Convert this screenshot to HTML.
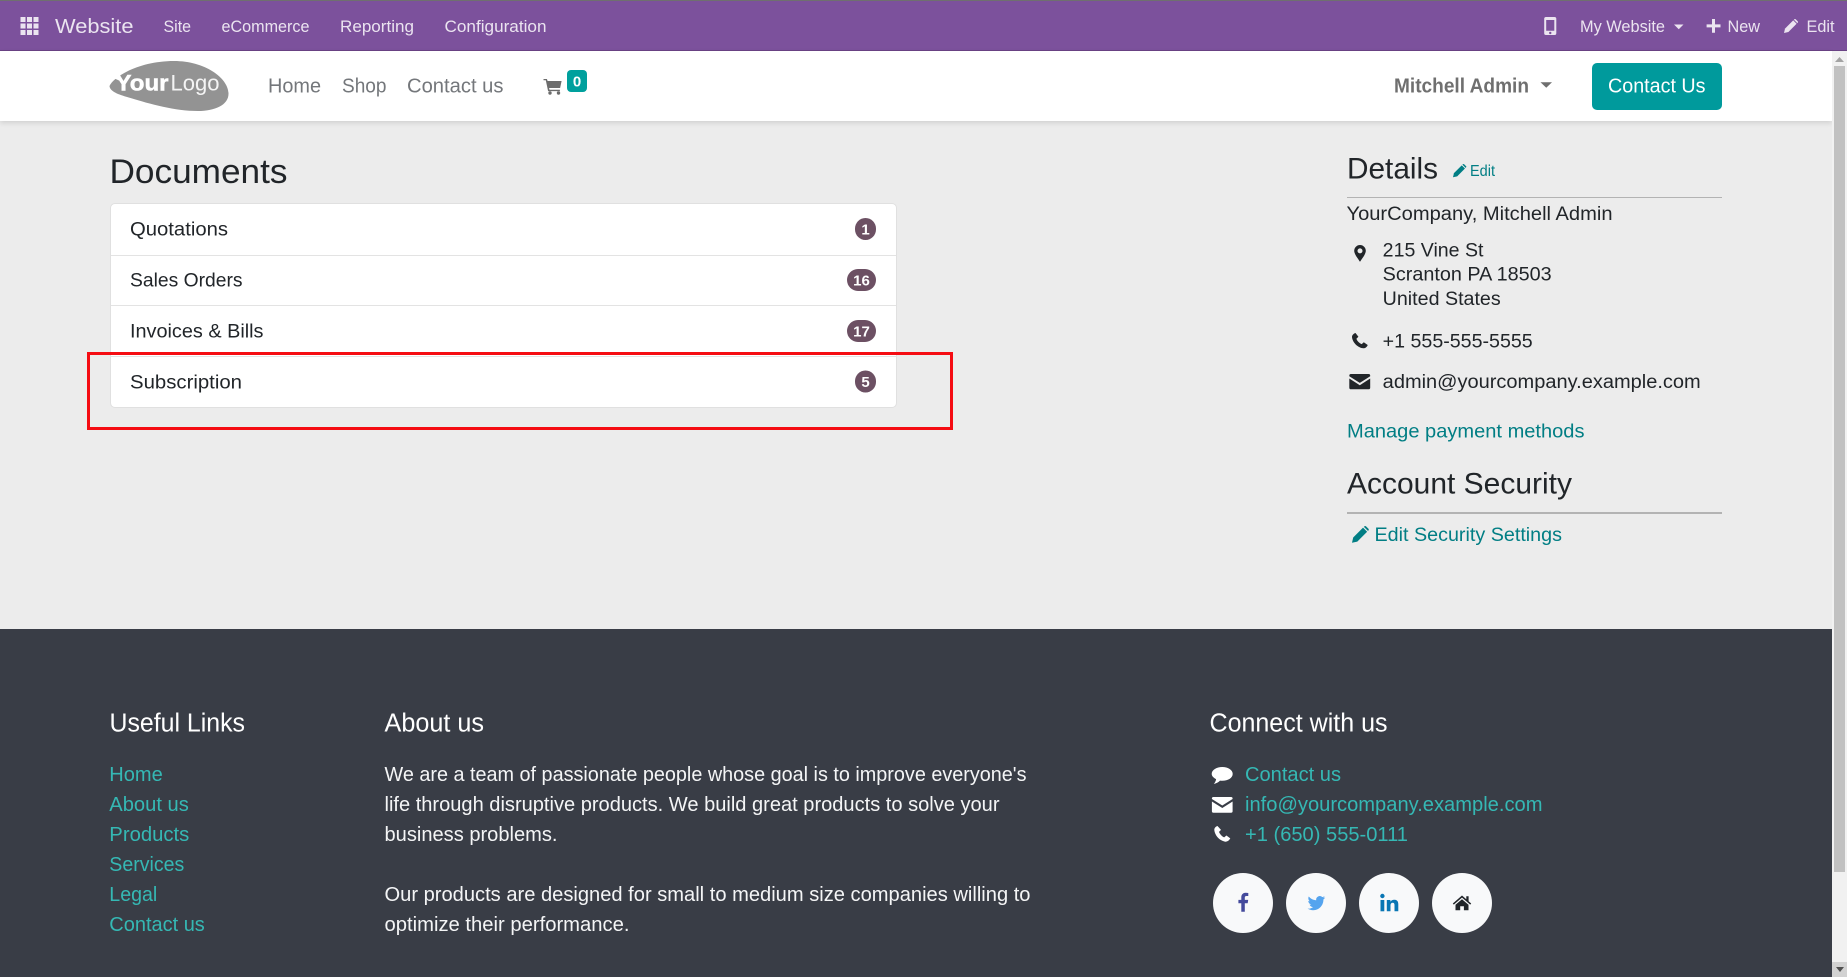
<!DOCTYPE html>
<html lang="en">
<head>
<meta charset="utf-8">
<title>Website</title>
<style>
html,body{margin:0;padding:0;width:1847px;height:977px;overflow:hidden;background:#ececec}
.abs{position:absolute}
#bar{left:0;top:0;width:1847px;height:51px;background:#7c519c;border-top:1px solid #6f6f6f;border-bottom:1px solid #6a4385;box-sizing:border-box}
#head{left:0;top:51px;width:1832px;height:70px;background:#fff;box-shadow:0 2px 5px rgba(0,0,0,.12)}
#foot{left:0;top:629px;width:1832px;height:348px;background:#393d46}
#track{left:1832px;top:51px;width:15px;height:926px;background:#f1f1f1}
#thumb{left:1834px;top:66px;width:11px;height:806px;background:#c1c1c1}
#btnb{left:1832px;top:962px;width:15px;height:15px;background:#d2d2d2}
#card{left:110px;top:203px;width:787px;height:205px;background:#fff;border:1px solid #e0e0e0;border-radius:5px;box-sizing:border-box}
#card div{position:absolute;left:0;right:0;height:1px;background:#e3e3e3}
#cta{left:1592px;top:63px;width:130px;height:47px;background:#009a9c;border-radius:5px}
.hr{left:1347px;width:375px;background:#b3b3b3}
#red{left:87px;top:352px;width:866px;height:78px;border:3px solid #f50c12;box-sizing:border-box}
svg{position:absolute;left:0;top:0}
text{font-family:"Liberation Sans",Arial,sans-serif}
.top{fill:#ebe4f0;font-size:17px}
.nav{fill:#74777b;font-size:20.5px}
.dark{fill:#212529;font-size:19px}
.link{fill:#017e84;font-size:19.5px}
.ft{fill:#fff;font-size:25.5px}
.fl{fill:#35b8b4;font-size:20px}
.fp{fill:#f4f5f6;font-size:20px}
.bd{fill:#fff;font-size:15px;font-weight:700;text-anchor:middle}
</style>
</head>
<body>
<div class="abs" id="bar"></div>
<div class="abs" id="head"></div>
<div class="abs" id="foot"></div>
<div class="abs" id="track"></div>
<div class="abs" id="thumb"></div>
<div class="abs" id="btnb"></div>
<div class="abs" id="card"><div style="top:51px"></div><div style="top:101px"></div><div style="top:152px"></div></div>
<div class="abs" id="cta"></div>
<div class="abs hr" style="top:197px;height:1px"></div>
<div class="abs hr" style="top:512px;height:2px"></div>
<svg width="1847" height="977" viewBox="0 0 1847 977" xmlns="http://www.w3.org/2000/svg">
  <defs>
    <g id="pencil">
      <path d="M0 14L1 9.600L9.200 1.400L12.600 4.800L4.400 13Z"/>
      <path d="M9.900 .7L10.300 .3a1 1 0 0 1 1.400 0L13.700 2.300a1 1 0 0 1 0 1.400L13.300 4.100Z"/>
    </g>
  </defs>
  <!-- top bar -->
  <g fill="#ebe4f0">
    <rect x="20.500" y="17" width="5" height="5"/><rect x="27" y="17" width="5" height="5"/><rect x="33.500" y="17" width="5" height="5"/>
    <rect x="20.500" y="23.500" width="5" height="5"/><rect x="27" y="23.500" width="5" height="5"/><rect x="33.500" y="23.500" width="5" height="5"/>
    <rect x="20.500" y="30" width="5" height="5"/><rect x="27" y="30" width="5" height="5"/><rect x="33.500" y="30" width="5" height="5"/>
  </g>
  <text class="top" x="55" y="33" style="font-size:20.500px" textLength="78.500" lengthAdjust="spacingAndGlyphs">Website</text>
  <text class="top" x="163.500" y="32" textLength="27.500" lengthAdjust="spacingAndGlyphs">Site</text>
  <text class="top" x="221.500" y="32" textLength="88" lengthAdjust="spacingAndGlyphs">eCommerce</text>
  <text class="top" x="340" y="32" textLength="74" lengthAdjust="spacingAndGlyphs">Reporting</text>
  <text class="top" x="444.500" y="32" textLength="102" lengthAdjust="spacingAndGlyphs">Configuration</text>

  <path fill-rule="evenodd" fill="#ebe4f0" d="M1546 17h8.500a1.800 1.800 0 0 1 1.800 1.800v14.400a1.800 1.800 0 0 1-1.800 1.800h-8.500a1.800 1.800 0 0 1-1.800-1.800V18.800a1.800 1.800 0 0 1 1.800-1.800zm.2 3v10.800h8.100V20zm4.050 11.800a1.200 1.200 0 1 0 0 2.400 1.200 1.200 0 0 0 0-2.400z"/>
  <text class="top" x="1580" y="32" textLength="85" lengthAdjust="spacingAndGlyphs">My Website</text>
  <path fill="#ebe4f0" d="M1674 24.500h9.500l-4.750 4.800z"/>
  <path fill="#ebe4f0" d="M1712 19h3v5.400h5.500v3h-5.500v5.400h-3v-5.400h-5.400v-3h5.400z"/>
  <text class="top" x="1727.500" y="32" textLength="32.500" lengthAdjust="spacingAndGlyphs">New</text>
  <use href="#pencil" fill="#ebe4f0" transform="translate(1784 19)"/>
  <text class="top" x="1806.500" y="32" textLength="28" lengthAdjust="spacingAndGlyphs">Edit</text>

  <!-- header -->
  <path fill="#939393" d="M109.500 86C114 76 140 61 174 61C205 61 228 78 228.500 93C229 105 215 111 198 111C175 111 150 104 130.500 98C120 95 110 92 109.500 86Z"/>
  <path fill="#fff" d="M108 75.500L120 77.500L119 80.500Z"/>
  <text x="115.500" y="90.500" fill="#fff" font-size="22" font-weight="700" textLength="53" lengthAdjust="spacingAndGlyphs" stroke="#fff" stroke-width=".5">Your</text>
  <text x="170.500" y="90.500" fill="#fff" font-size="22" textLength="49" lengthAdjust="spacingAndGlyphs" opacity=".9">Logo</text>
  <text class="nav" x="268" y="92.500" textLength="53" lengthAdjust="spacingAndGlyphs">Home</text>
  <text class="nav" x="342" y="92.500" textLength="44.500" lengthAdjust="spacingAndGlyphs">Shop</text>
  <text class="nav" x="407" y="92.500" textLength="96.500" lengthAdjust="spacingAndGlyphs">Contact us</text>
  <path fill="#6c6c6c" d="M543.500 79h3.400l.7 2h14l-1.500 7h-11l.4 1.800h10.400v1.300h-11.800L545.800 80.300h-2.300z"/>
  <circle cx="550" cy="93" r="1.700" fill="#6c6c6c"/><circle cx="558.500" cy="93" r="1.700" fill="#6c6c6c"/>
  <rect x="567" y="70" width="20" height="22" rx="4" fill="#00a09d"/>
  <text x="577" y="86.500" fill="#fff" font-size="15" font-weight="700" text-anchor="middle">0</text>
  <text x="1394" y="92.500" fill="#6f6f6f" font-size="20.500" font-weight="700" textLength="135" lengthAdjust="spacingAndGlyphs">Mitchell Admin</text>
  <path fill="#6f6f6f" d="M1540.500 82.300h11.500l-5.750 5.500z"/>
  <text x="1608" y="92.500" fill="#fff" font-size="20.500" textLength="97.500" lengthAdjust="spacingAndGlyphs">Contact Us</text>

  <!-- documents -->
  <text x="109.500" y="183" fill="#212529" font-size="34" textLength="178" lengthAdjust="spacingAndGlyphs">Documents</text>
  <text class="dark" x="130" y="235.500" textLength="98" lengthAdjust="spacingAndGlyphs">Quotations</text>
  <text class="dark" x="130" y="286.500" textLength="112.500" lengthAdjust="spacingAndGlyphs">Sales Orders</text>
  <text class="dark" x="130" y="337.500" textLength="133.500" lengthAdjust="spacingAndGlyphs">Invoices &amp; Bills</text>
  <text class="dark" x="130" y="388.500" textLength="112" lengthAdjust="spacingAndGlyphs">Subscription</text>
  <g fill="#6c5063">
    <rect x="855" y="218" width="21" height="22" rx="10.500"/>
    <rect x="847" y="269" width="29" height="22" rx="11"/>
    <rect x="847" y="320" width="29" height="22" rx="11"/>
    <rect x="855" y="370.500" width="21" height="22" rx="10.500"/>
  </g>
  <text class="bd" x="865.500" y="234.500">1</text>
  <text class="bd" x="861.500" y="285.500">16</text>
  <text class="bd" x="861.500" y="336.500">17</text>
  <text class="bd" x="865.500" y="387">5</text>

  <!-- details -->
  <text x="1347" y="178.500" fill="#212529" font-size="30" textLength="91" lengthAdjust="spacingAndGlyphs">Details</text>
  <use href="#pencil" fill="#017e84" transform="translate(1453 164) scale(.95)"/>
  <text class="link" x="1470" y="176" style="font-size:15.500px" textLength="25" lengthAdjust="spacingAndGlyphs">Edit</text>
  <text class="dark" x="1346.500" y="220" textLength="266" lengthAdjust="spacingAndGlyphs">YourCompany, Mitchell Admin</text>
  <path fill-rule="evenodd" fill="#212529" d="M1360 245a5.800 5.800 0 0 0-5.800 5.800c0 3.500 4.300 8.500 5.800 11 1.500-2.500 5.800-7.500 5.800-11a5.800 5.800 0 0 0-5.800-5.800zm0 3.400a2.500 2.500 0 1 1 0 5 2.500 2.500 0 0 1 0-5z"/>
  <text class="dark" x="1382.700" y="256.500" textLength="100.800" lengthAdjust="spacingAndGlyphs">215 Vine St</text>
  <text class="dark" x="1382.700" y="280.500" textLength="169" lengthAdjust="spacingAndGlyphs">Scranton PA 18503</text>
  <text class="dark" x="1382.700" y="304.800" textLength="118" lengthAdjust="spacingAndGlyphs">United States</text>
  <path fill="#212529" d="M1355.500 333c-1.800.5-3.500 2-3.500 4 .4 5.500 6 11 11.500 11.300 2 0 3.700-1.600 4.200-3.300l-3.900-2.800-2.100 1.900c-2.300-.9-4.500-3.100-5.300-5.400l2-2z"/>
  <text class="dark" x="1382.700" y="347.500" textLength="150" lengthAdjust="spacingAndGlyphs">+1 555-555-5555</text>
  <path fill="#212529" d="M1351 374h17.500a1.700 1.700 0 0 1 1.700 1.700v.5l-10.400 6.700-10.500-6.700v-.5a1.700 1.700 0 0 1 1.700-1.700zM1349.300 378.500l10.500 6.700 10.400-6.700v9.100a1.700 1.700 0 0 1-1.700 1.700H1351a1.700 1.700 0 0 1-1.700-1.700z"/>
  <text class="dark" x="1382.700" y="388" textLength="318" lengthAdjust="spacingAndGlyphs">admin@yourcompany.example.com</text>
  <text class="link" x="1347" y="437.500" textLength="237.500" lengthAdjust="spacingAndGlyphs">Manage payment methods</text>
  <text x="1347" y="493.500" fill="#212529" font-size="30" textLength="225" lengthAdjust="spacingAndGlyphs">Account Security</text>
  <use href="#pencil" fill="#017e84" transform="translate(1352 526) scale(1.200)"/>
  <text class="link" x="1374.500" y="541" textLength="187.500" lengthAdjust="spacingAndGlyphs">Edit Security Settings</text>

  <!-- footer -->
  <text class="ft" x="109.500" y="731.500" textLength="135.500" lengthAdjust="spacingAndGlyphs">Useful Links</text>
  <text class="ft" x="384.500" y="731.500" textLength="99.500" lengthAdjust="spacingAndGlyphs">About us</text>
  <text class="ft" x="1209.500" y="731.500" textLength="178" lengthAdjust="spacingAndGlyphs">Connect with us</text>
  <text class="fl" x="109.300" y="781" textLength="53.500" lengthAdjust="spacingAndGlyphs">Home</text>
  <text class="fl" x="109.300" y="811" textLength="79.500" lengthAdjust="spacingAndGlyphs">About us</text>
  <text class="fl" x="109.300" y="841" textLength="80" lengthAdjust="spacingAndGlyphs">Products</text>
  <text class="fl" x="109.300" y="871" textLength="75" lengthAdjust="spacingAndGlyphs">Services</text>
  <text class="fl" x="109.300" y="901" textLength="48" lengthAdjust="spacingAndGlyphs">Legal</text>
  <text class="fl" x="109.300" y="931" textLength="95.500" lengthAdjust="spacingAndGlyphs">Contact us</text>
  <text class="fp" x="384.500" y="781" textLength="642" lengthAdjust="spacingAndGlyphs">We are a team of passionate people whose goal is to improve everyone's</text>
  <text class="fp" x="384.500" y="811" textLength="615" lengthAdjust="spacingAndGlyphs">life through disruptive products. We build great products to solve your</text>
  <text class="fp" x="384.500" y="841" textLength="173" lengthAdjust="spacingAndGlyphs">business problems.</text>
  <text class="fp" x="384.500" y="901" textLength="646" lengthAdjust="spacingAndGlyphs">Our products are designed for small to medium size companies willing to</text>
  <text class="fp" x="384.500" y="931" textLength="245" lengthAdjust="spacingAndGlyphs">optimize their performance.</text>

  <path fill="#fff" d="M1222.300 767c5.700 0 10.400 2.900 10.400 6.900s-4.700 6.900-10.400 6.900c-.8 0-1.600 0-2.300-.2-1.500 1.500-3.400 2.700-6.200 3.400 1.100-1.300 2.100-3 2.300-4.900-2.700-1.300-4.400-3.100-4.400-5.200 0-4 4.900-6.900 10.600-6.900z"/>
  <text class="fl" x="1245" y="781" textLength="96" lengthAdjust="spacingAndGlyphs">Contact us</text>
  <path fill="#fff" d="M1213.500 797h17.500a1.600 1.600 0 0 1 1.600 1.600v.4l-10.300 6.500-10.400-6.500v-.4a1.600 1.600 0 0 1 1.600-1.600zM1211.900 801.500l10.400 6.500 10.300-6.500v9.600a1.600 1.600 0 0 1-1.600 1.600h-17.500a1.600 1.600 0 0 1-1.600-1.600z"/>
  <text class="fl" x="1245" y="811" textLength="297.500" lengthAdjust="spacingAndGlyphs">info@yourcompany.example.com</text>
  <path fill="#fff" d="M1217.500 826c-1.800.5-3.200 2-3.200 3.800.4 5.700 5.500 11.200 11.200 11.900 2 0 3.800-1.500 4.800-3.300l-3.900-2.900-2.200 1.900c-2.200-.9-4.300-3.200-5.200-5.500l2-2z"/>
  <text class="fl" x="1245" y="841" textLength="163" lengthAdjust="spacingAndGlyphs">+1 (650) 555-0111</text>

  <g fill="#f8f9fa">
    <circle cx="1243" cy="903" r="30"/><circle cx="1316" cy="903" r="30"/><circle cx="1389" cy="903" r="30"/><circle cx="1462" cy="903" r="30"/>
  </g>
  <path fill="#444a9c" d="M1248.300 893v3h-1.800c-1.400 0-1.700.7-1.700 1.700v2.200h3.400l-.5 3.400h-2.900v8.400h-3.500v-8.400h-2.900v-3.400h2.900v-2.500c0-2.900 1.800-4.600 4.400-4.600z"/>
  <path fill="#55a4ee" d="M1325 897.500c-.7.300-1.300.5-2 .6.700-.4 1.300-1.100 1.500-1.900-.7.400-1.400.7-2.200.9a3.600 3.600 0 0 0-6.100 3.200c-3-.2-5.600-1.600-7.400-3.800-.9 1.600-.5 3.700 1.100 4.800-.6 0-1.100-.2-1.600-.4 0 1.700 1.200 3.200 2.900 3.600-.5.100-1.100.2-1.600.1.500 1.400 1.800 2.400 3.400 2.500-1.500 1.200-3.500 1.800-5.400 1.500 1.600 1 3.500 1.600 5.500 1.600 6.700 0 10.500-5.700 10.300-10.700.7-.5 1.300-1.200 1.800-2z"/>
  <g fill="#0976b4">
    <rect x="1380.500" y="900" width="3.800" height="11.300"/><circle cx="1382.400" cy="896" r="2.200"/>
    <path d="M1386.800 900h3.600v1.700c.8-1.200 2.100-2 3.900-2 2.900 0 4 1.800 4 4.800v6.800h-3.800v-6.200c0-1.500-.5-2.400-1.800-2.400-1.500 0-2.200 1-2.200 2.600v6h-3.700z"/>
  </g>
  <path fill="#212529" d="M1462 895.500l4.300 3.700v-2.900h2.300v4.900l2.600 2.300-1 1.100-8.200-7-8.200 7-1-1.100zM1462 899.300l6.500 5.500v5.400h-4.600v-4h-3.700v4h-4.700v-5.400z"/>

  <!-- scrollbar arrows -->
  <path fill="#a3a3a3" d="M1839.500 57l-4.500 5h9z"/>
  <path fill="#505050" d="M1836 967h8l-4 5z"/>
</svg>
<div class="abs" id="red"></div>
</body>
</html>
